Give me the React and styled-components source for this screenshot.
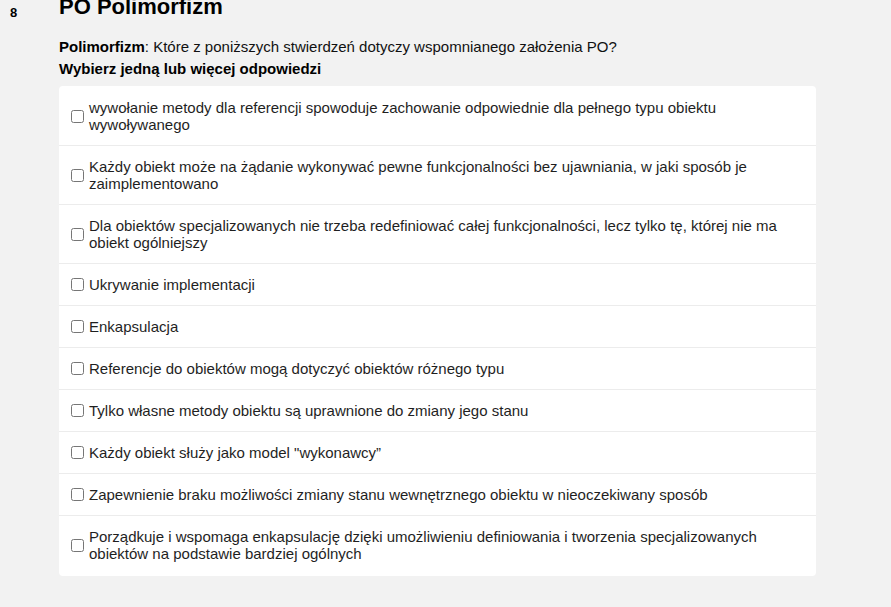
import React from 'react'
import styled, { createGlobalStyle } from 'styled-components'

const Global = createGlobalStyle`
  html, body {
    margin: 0;
    padding: 0;
    background: #f2f2f2;
    font-family: Arial, "Liberation Sans", sans-serif;
    color: #1a1a1a;
  }
`

const Page = styled.div`
  display: flex;
  width: 891px;
  height: 607px;
  overflow: hidden;
  margin-top: -6px;
`

const Gutter = styled.div`
  width: 59px;
  flex-shrink: 0;
  box-sizing: border-box;
  padding: 11px 0 0 10px;
  font-size: 13px;
  font-weight: bold;
  color: #000;
`

const Main = styled.div`
  width: 757px;
`

const Title = styled.h2`
  margin: 0;
  font-size: 22px;
  line-height: 26px;
  font-weight: bold;
  color: #000;
`

const Question = styled.div`
  margin-top: 16px;
  font-size: 15px;
  line-height: 22px;
  color: #111;
  b { color: #000; }
`

const Hint = styled.div`
  font-size: 15px;
  line-height: 22px;
  font-weight: bold;
  color: #000;
  margin-bottom: 6px;
`

const Card = styled.div`
  background: #fff;
  border-radius: 4px;
`

const Row = styled.label`
  display: flex;
  align-items: center;
  padding: 12px;
  font-size: 15px;
  line-height: 17px;
  color: #1f1f1f;
  &:first-child {
    padding-top: 13px;
  }
  &:last-child {
    padding-bottom: 14px;
  }
  & + & {
    border-top: 1px solid #ececec;
  }
`

const Box = styled.input`
  flex-shrink: 0;
  width: 13px;
  height: 13px;
  margin: 0 5px 0 0;
`

const options = [
  'wywołanie metody dla referencji spowoduje zachowanie odpowiednie dla pełnego typu obiektu wywoływanego',
  'Każdy obiekt może na żądanie wykonywać pewne funkcjonalności bez ujawniania, w jaki sposób je zaimplementowano',
  'Dla obiektów specjalizowanych nie trzeba redefiniować całej funkcjonalności, lecz tylko tę, której nie ma obiekt ogólniejszy',
  'Ukrywanie implementacji',
  'Enkapsulacja',
  'Referencje do obiektów mogą dotyczyć obiektów różnego typu',
  'Tylko własne metody obiektu są uprawnione do zmiany jego stanu',
  'Każdy obiekt służy jako model "wykonawcy”',
  'Zapewnienie braku możliwości zmiany stanu wewnętrznego obiektu w nieoczekiwany sposób',
  'Porządkuje i wspomaga enkapsulację dzięki umożliwieniu definiowania i tworzenia specjalizowanych obiektów na podstawie bardziej ogólnych',
]

export default function App() {
  return (
    <>
      <Global />
      <Page>
        <Gutter>8</Gutter>
        <Main>
          <Title>PO Polimorfizm</Title>
          <Question>
            <b>Polimorfizm</b>: Które z poniższych stwierdzeń dotyczy wspomnianego założenia PO?
          </Question>
          <Hint>Wybierz jedną lub więcej odpowiedzi</Hint>
          <Card>
            {options.map((o, i) => (
              <Row key={i}>
                <Box type="checkbox" />
                <span>{o}</span>
              </Row>
            ))}
          </Card>
        </Main>
      </Page>
    </>
  )
}
